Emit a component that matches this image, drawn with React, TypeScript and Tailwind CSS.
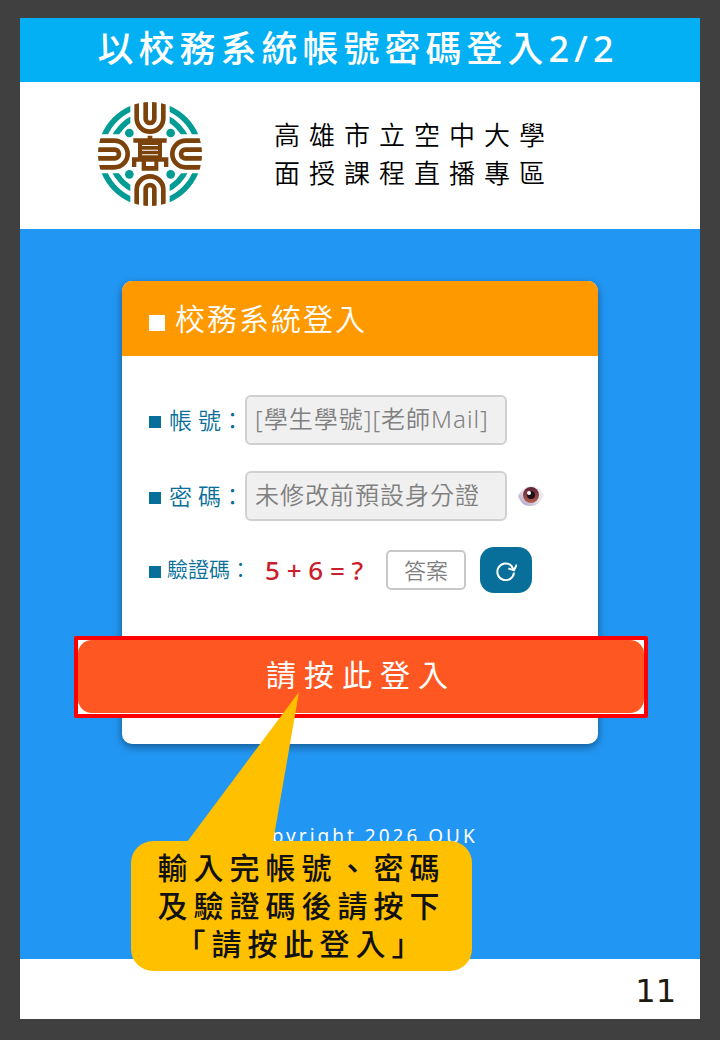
import { ReactNode } from "react";

function Logo() {
  return (
    <svg viewBox="25 29 312 312" className="size-[104px] shrink-0" role="img" aria-label="高雄市立空中大學">
      <defs>
        <clipPath id="disc">
          <circle cx="181" cy="185" r="156" />
        </clipPath>
        <clipPath id="corners">
          <path d="M20 24H122V126H20ZM240 24H342V126H240ZM20 243H122V346H20ZM240 243H342V346H240Z" />
        </clipPath>
      </defs>
      <g clipPath="url(#corners)" fill="none" stroke="#029c95" strokeWidth="17">
        <circle cx="181" cy="185" r="147" />
        <circle cx="181" cy="185" r="118" />
      </g>
      <g fill="#029c95">
        <circle cx="119" cy="122" r="13" />
        <circle cx="243" cy="122" r="13" />
        <circle cx="119" cy="246" r="13" />
        <circle cx="243" cy="246" r="13" />
      </g>
      <g clipPath="url(#disc)" fill="none" stroke="#7b430b" strokeWidth="14">
        {[0, 90, 180, 270].map((deg) => (
          <g key={deg} transform={`rotate(${deg} 181 185)`}>
            <path d="M141 20V78A40 40 0 0 0 221 78V20" />
            <path d="M168 20V79A13 13 0 0 0 194 79V20" />
          </g>
        ))}
      </g>
      <g fill="#7b430b">
        <path d="M174 130H188V138H231V151H217V195H236V224H223V208H206V235H156V208H140V224H127V195H145V151H131V138H174Z" />
        <path fill="#fff" d="M157 158H205V161H157ZM157 172H205V175H157ZM157 186H205V189H157ZM169 208H194V221H169Z" />
      </g>
    </svg>
  );
}

function EyeIcon() {
  return (
    <svg viewBox="0 0 26 22" className="h-[22px] w-[26px]" aria-hidden="true">
      <defs>
        <linearGradient id="white" x1="0" y1="1" x2="1" y2="0">
          <stop offset="0" stopColor="#a793bd" />
          <stop offset="0.5" stopColor="#e6e2ec" />
          <stop offset="1" stopColor="#f0f0f2" />
        </linearGradient>
        <linearGradient id="iris" x1="0" y1="0" x2="0" y2="1">
          <stop offset="0" stopColor="#5a1f35" />
          <stop offset="1" stopColor="#b5604e" />
        </linearGradient>
      </defs>
      <path d="M0 11C4 4 8 1 13 1S22 4 26 10C22 18 18 21 12 21S3 18 0 11Z" fill="url(#white)" />
      <circle cx="13" cy="10" r="8" fill="url(#iris)" />
      <circle cx="13" cy="10" r="4" fill="#1f0d18" />
      <circle cx="11" cy="8" r="2" fill="#fff" />
    </svg>
  );
}

function RefreshIcon() {
  return (
    <svg viewBox="0 0 66 66" className="size-[22px]" fill="none" stroke="#fff" strokeWidth="6" aria-hidden="true">
      <path d="M56 32L49 20A25 25 0 1 0 57 41" />
      <path d="M40 28L57 34L65 17" />
    </svg>
  );
}

function Label({ htmlFor, className, children }: { htmlFor: string; className: string; children: ReactNode }) {
  return (
    <label
      htmlFor={htmlFor}
      className={`flex shrink-0 items-center font-[350] whitespace-nowrap text-[#076f99] ${className}`}
    >
      <span className="mt-1 size-3 bg-[#076f99]" />
      {children}
    </label>
  );
}

export default function App() {
  return (
    <div className="min-h-screen bg-[#404040] px-5 pt-[18px] pb-[21px] font-['Noto_Sans','Noto_Sans_CJK_TC',sans-serif]">
      <h1 className="bg-[#02b0f3] pr-1 pb-[2px] text-center text-[36px] leading-[62px] font-medium tracking-[5px] text-white">
        以校務系統帳號密碼登入2/2
      </h1>

      <header className="flex h-[147px] items-center justify-center gap-[72px] bg-white pr-[68px] pb-[4px]">
        <Logo />
        <p className="text-[26px] leading-[38px] font-[350] tracking-[9px] whitespace-nowrap text-black">
          高雄市立空中大學
          <br />
          面授課程直播專區
        </p>
      </header>

      <main className="relative bg-[#2296f3] pt-[52px] pb-[108px]">
        <form
          className="mx-auto w-[70%] min-w-[476px] rounded-[10px] bg-white pb-[26px] shadow-[0_3px_8px_rgba(0,0,0,0.4)]"
          onSubmit={(e) => e.preventDefault()}
        >
          <h2 className="flex h-[75px] items-center rounded-t-[10px] bg-[#ff9900] pl-[27px] text-[30px] font-[350] tracking-[2px] text-white">
            <span className="mt-2 mr-[10px] size-4 bg-white" />
            校務系統登入
          </h2>

          <div className="flex flex-col gap-[26px] px-[27px] pt-[39px]">
            <div className="flex items-center">
              <Label htmlFor="account" className="w-24 gap-2 text-[23px]">帳 號：</Label>
              <input
                id="account"
                placeholder="[學生學號][老師Mail]"
                className="h-[50px] w-[262px] rounded-md border-2 border-[#d0d0d0] bg-[#f0f0f0] px-2 pb-[3px] text-[24px] font-[350] tracking-[1px] placeholder:text-[#808080]"
              />
            </div>
            <div className="flex items-center">
              <Label htmlFor="password" className="w-24 gap-2 text-[23px]">密 碼：</Label>
              <input
                id="password"
                type="password"
                placeholder="未修改前預設身分證"
                className="h-[50px] w-[262px] rounded-md border-2 border-[#d0d0d0] bg-[#f0f0f0] px-2 pb-[3px] text-[24px] font-[350] tracking-[1px] placeholder:text-[#808080]"
              />
              <button type="button" aria-label="顯示密碼" className="ml-[11px]">
                <EyeIcon />
              </button>
            </div>
            <div className="flex items-center">
              <Label htmlFor="answer" className="w-[116px] gap-[6px] text-[21px]">驗證碼：</Label>
              <span className="w-[121px] text-[26px] leading-[38px] font-medium whitespace-nowrap text-[#c8202a]">5 + 6 = ?</span>
              <input
                id="answer"
                placeholder="答案"
                className="h-10 w-20 rounded-[5px] border-2 border-[#c8c8c8] text-center text-[22px] font-[350] placeholder:text-[#808080]"
              />
              <button
                type="button"
                aria-label="重新整理驗證碼"
                className="ml-[14px] flex h-[46px] w-[52px] items-center justify-center rounded-[14px] bg-[#076f99]"
              >
                <RefreshIcon />
              </button>
            </div>
          </div>

          <div className="mt-[43px] -mr-[50px] -ml-12 rounded-xs border-4 border-[#ff0000] bg-white pb-px">
            <button
              type="submit"
              className="h-[73px] w-full rounded-[14px] bg-[#ff5722] pb-1 text-center text-[30px] tracking-[8px] text-white"
            >
              請按此登入
            </button>
          </div>
        </form>

        <p className="mt-[77px] text-center text-[19px] leading-[30px] tracking-[3px] text-white">
          Copyright 2026 OUK
        </p>

        {/* speech bubble pointing at the login button */}
        <div className="absolute top-[612px] left-1/2 -ml-[229px] w-[341px] rounded-[22px] bg-[#ffc000] py-2 text-center text-[30px] leading-[38px] font-medium tracking-[6px] text-[#111]">
          <svg viewBox="0 0 341 150" className="absolute bottom-full left-0 -mb-px h-[150px] w-[341px]" aria-hidden="true">
            <path d="M168 0L142 150H56Z" fill="#ffc000" />
          </svg>
          <p>
            輸入完帳號、密碼
            <br />
            及驗證碼後請按下
            <br />
            「請按此登入」
          </p>
        </div>
      </main>

      <footer className="bg-white pt-1 pr-6 text-right font-['DejaVu_Sans',sans-serif] text-[32px] leading-[56px] text-[#1d1b10]">
        11
      </footer>
    </div>
  );
}
